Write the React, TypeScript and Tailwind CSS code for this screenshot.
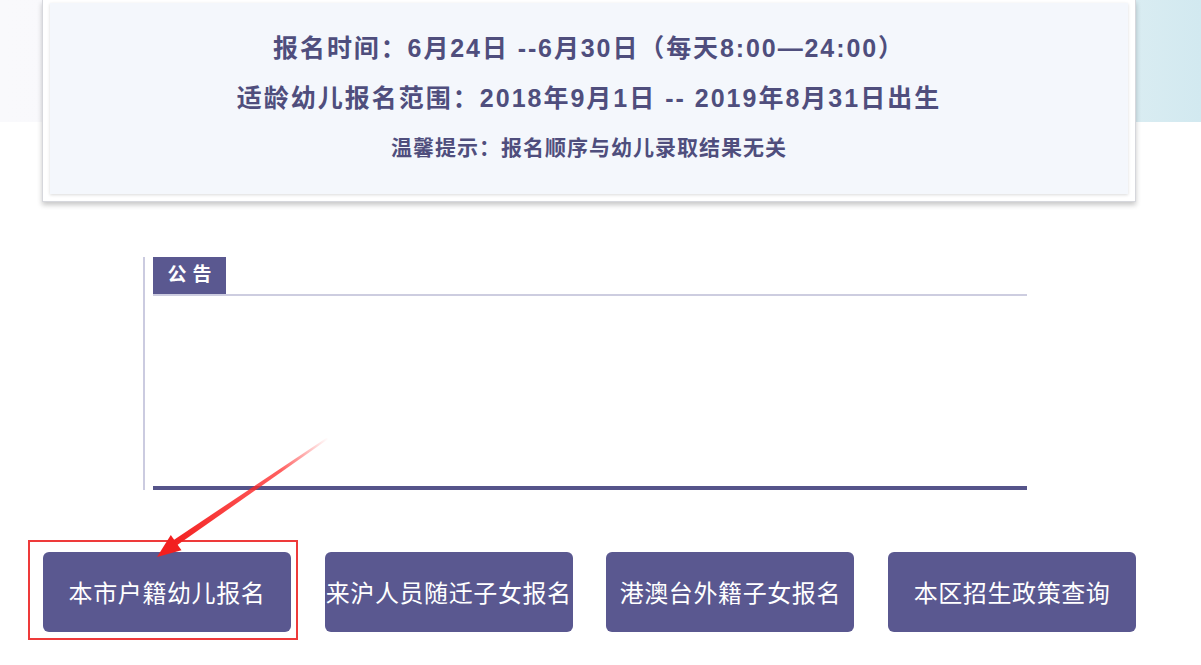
const buttons = ['本市户籍幼儿报名', '来沪人员随迁子女报名', '港澳台外籍子女报名', '本区招生政策查询'];

const font = { fontFamily: '"Liberation Sans", "Noto Sans CJK SC", sans-serif' };

export default function App() {
  return (
    <div
      className="relative w-[1201px] h-[665px] overflow-hidden bg-white bg-no-repeat bg-[length:100%_122px] bg-[linear-gradient(to_right,#f9f9fc_0%,#f5f7fa_60%,#e2f0f4_88%,#d2e9f0_100%)]"
      style={font}
    >
      {/* info card */}
      <div className="ml-[42px] w-[1094px] h-[202px] px-[7px] pt-[3px] pb-[7px] bg-white border-x border-b border-[#d6d7dc] shadow-[0_3px_5px_rgba(0,0,0,0.22)]">
        <div className="h-full bg-[#f4f7fc] shadow-[0_1px_3px_rgba(0,0,0,0.15)] pt-[20px] flex flex-col items-center text-[#4f4e7d] font-bold">
          <p className="h-[50px] leading-[50px] text-[25px] tracking-[1.9px]">报名时间：6月24日 --6月30日（每天8:00—24:00）</p>
          <p className="h-[50px] leading-[50px] text-[25px] tracking-[2px]">适龄幼儿报名范围：2018年9月1日 -- 2019年8月31日出生</p>
          <p className="h-[50px] leading-[50px] text-[21px] tracking-[1px]">温馨提示：报名顺序与幼儿录取结果无关</p>
        </div>
      </div>

      {/* notice board */}
      <div className="ml-[143px] mt-[55px] w-[884px] h-[233px] border-l-2 border-[#cbcbe0] pl-[8px] flex flex-col">
        <div className="flex border-b-2 border-[#cdcde0]">
          <div className="w-[73px] h-[37px] bg-[#5a5890] text-white font-bold text-[19px] tracking-[6px] flex items-center justify-center pl-[6px]">
            公告
          </div>
        </div>
        <div className="flex-1" />
        <div className="border-b-4 border-[#55548a]" />
      </div>

      {/* action buttons */}
      <div className="ml-[43px] mt-[62px] flex gap-[33.7px]">
        {buttons.map((label, i) => (
          <div key={label} className="relative">
            <button
              className="w-[248px] h-[80px] rounded-[6px] bg-[#5a5890] text-white text-[24px] font-normal whitespace-nowrap flex items-center justify-center tracking-[0.6px]"
              style={{ fontFamily: '"Noto Sans CJK SC", sans-serif' }}
            >
              {label}
            </button>
            {i === 0 && (
              <div className="absolute -left-[15px] -top-[12px] w-[270px] h-[100px] border-2 border-[#ee3a3a] pointer-events-none" />
            )}
          </div>
        ))}
      </div>

      {/* annotation arrow */}
      <svg className="absolute left-0 top-0 pointer-events-none" width="1201" height="665">
        <defs>
          <linearGradient id="fade" x1="328" y1="438" x2="170" y2="547" gradientUnits="userSpaceOnUse">
            <stop offset="0" stopColor="#ff2a2a" stopOpacity="0" />
            <stop offset="0.3" stopColor="#ff2a2a" stopOpacity="0.75" />
            <stop offset="1" stopColor="#f21f1f" stopOpacity="1" />
          </linearGradient>
        </defs>
        <polygon points="328.6,438.8 327.4,437.2 173.0,540.4 176.6,545.6" fill="url(#fade)" />
        <polygon points="157,557 170.8,535 181.5,550.2" fill="#f21f1f" />
      </svg>
    </div>
  );
}
